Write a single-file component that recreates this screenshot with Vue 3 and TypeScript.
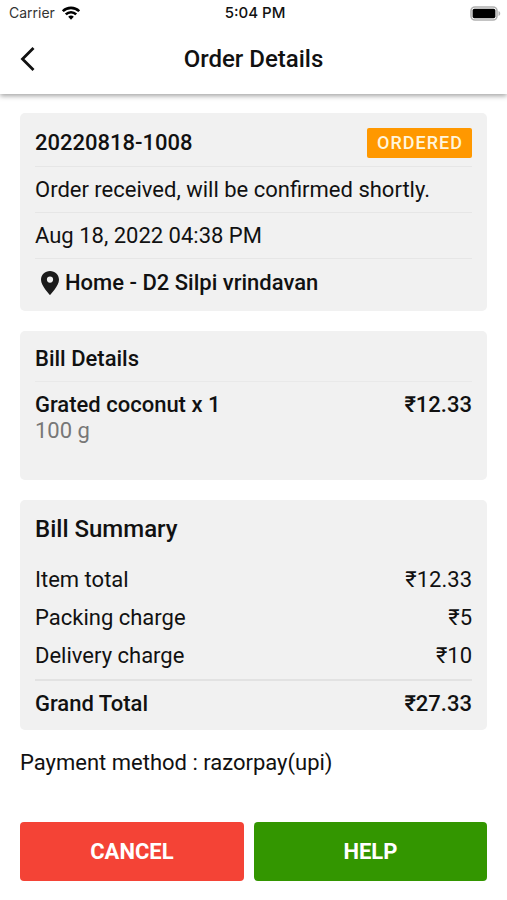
<script setup lang="ts">
interface Line {
  label: string
  amount: string
}

const order = {
  id: '20220818-1008',
  status: 'ORDERED',
  message: 'Order received, will be confirmed shortly.',
  placedAt: 'Aug 18, 2022 04:38 PM',
  address: 'Home - D2 Silpi vrindavan',
  payment: 'razorpay(upi)',
}

const items = [{ name: 'Grated coconut x 1', size: '100 g', price: '₹12.33' }]

const charges: Line[] = [
  { label: 'Item total', amount: '₹12.33' },
  { label: 'Packing charge', amount: '₹5' },
  { label: 'Delivery charge', amount: '₹10' },
]
const total: Line = { label: 'Grand Total', amount: '₹27.33' }
</script>

<template>
  <div class="screen">
    <header class="top">
      <div class="status-bar">
        <div class="carrier">
          <span>Carrier</span>
          <svg class="wifi" viewBox="0 0 18 14" aria-hidden="true">
            <g fill="none" stroke="#000" stroke-width="2.6">
              <path d="M.8 5.2C5.2 .7 12.8 .7 17.2 5.2" />
              <path d="M3.8 8.4C6.7 5.5 11.3 5.5 14.2 8.4" />
            </g>
            <path d="M6.2 10.8C7.8 9.2 10.2 9.2 11.8 10.8L9 13.7Z" />
          </svg>
        </div>
        <span class="time">5:04 PM</span>
        <svg class="battery" viewBox="0 0 31 15" aria-hidden="true">
          <rect x="1" y="1" width="26" height="13" rx="4" fill="#fff" stroke="#b0b0b0" stroke-width="1.6" />
          <rect x="2.6" y="2.8" width="22.8" height="9.4" rx="1.8" />
          <path d="M28.5 5V10C30.8 9 30.8 6 28.5 5Z" fill="#b0b0b0" />
        </svg>
      </div>
      <div class="title-bar">
        <button class="back" type="button" aria-label="Back">
          <svg viewBox="0 0 16 24" aria-hidden="true">
            <path d="M13.5 1L2.5 12L13.5 23" fill="none" stroke="#111" stroke-width="2.8" />
          </svg>
        </button>
        <h1>Order Details</h1>
      </div>
    </header>

    <main>
      <section class="card order">
        <div class="row head">
          <strong>{{ order.id }}</strong>
          <span class="badge">{{ order.status }}</span>
        </div>
        <div class="row">{{ order.message }}</div>
        <div class="row">{{ order.placedAt }}</div>
        <div class="row address">
          <svg class="pin" viewBox="0 0 18 24" aria-hidden="true">
            <path
              fill="#1c1c1c"
              fill-rule="evenodd"
              d="M9 0C4 0 0 3.9 0 8.7C0 15 9 24 9 24S18 15 18 8.7C18 3.9 14 0 9 0ZM9 5.5A3.1 3.1 0 1 1 9 11.7A3.1 3.1 0 1 1 9 5.5Z"
            />
          </svg>
          <strong>{{ order.address }}</strong>
        </div>
      </section>

      <section class="card bill">
        <h2>Bill Details</h2>
        <div v-for="item in items" :key="item.name" class="item">
          <div>
            <strong>{{ item.name }}</strong>
            <div class="size">{{ item.size }}</div>
          </div>
          <strong>{{ item.price }}</strong>
        </div>
      </section>

      <section class="card summary">
        <h2>Bill Summary</h2>
        <table>
          <tbody>
            <tr v-for="line in charges" :key="line.label">
              <th scope="row">{{ line.label }}</th>
              <td>{{ line.amount }}</td>
            </tr>
          </tbody>
          <tfoot>
            <tr>
              <th scope="row">{{ total.label }}</th>
              <td>{{ total.amount }}</td>
            </tr>
          </tfoot>
        </table>
      </section>

      <p class="payment">Payment method : {{ order.payment }}</p>

      <div class="actions">
        <button class="cancel" type="button">CANCEL</button>
        <button class="help" type="button">HELP</button>
      </div>
    </main>
  </div>
</template>

<style>
body {
  margin: 0;
  background: #fff;
}
</style>

<style scoped>
.screen {
  min-height: 100vh;
  font-family: Roboto, sans-serif;
  font-size: 22px;
  line-height: 26px;
  color: #111;
}
.top {
  background: #fff;
  box-shadow: 0 2px 5px rgba(0, 0, 0, 0.36);
}
.status-bar {
  display: grid;
  grid-template-columns: 1fr auto 1fr;
  align-items: center;
  height: 26px;
  padding: 0 6px 0 9px;
  font-family: Inter, sans-serif;
  font-size: 14px;
  line-height: 26px;
}
.carrier {
  display: flex;
  align-items: center;
  gap: 7px;
  color: #333;
}
.wifi {
  width: 18px;
  height: 14px;
}
.time {
  font-size: 15px;
  font-weight: 500;
}
.battery {
  justify-self: end;
  width: 31px;
  height: 15px;
}
.title-bar {
  display: grid;
  grid-template-columns: 40px 1fr 40px;
  align-items: center;
  height: 66px;
  padding: 0 14px 2px;
}
.back {
  display: flex;
  padding: 4px 6px;
  border: 0;
  background: none;
}
.back svg {
  width: 16px;
  height: 24px;
}
h1,
h2 {
  margin: 0;
  font-weight: 500;
}
h1 {
  font-size: 24px;
  line-height: 28px;
  text-align: center;
}
strong {
  font-weight: 500;
}
main {
  display: flex;
  flex-direction: column;
  gap: 20px;
  padding: 19px 20px;
}
.card {
  padding: 0 15px;
  border-radius: 5px;
  background: #f1f1f1;
}
.order {
  padding-top: 7px;
  padding-bottom: 4px;
}
.row {
  display: flex;
  align-items: center;
  height: 45px;
  border-bottom: 1px solid #e6e6e6;
}
.row:last-child {
  height: 48px;
  border-bottom: 0;
}
.row.head {
  justify-content: space-between;
  height: 46px;
}
.badge {
  padding: 0 9px 0 10px;
  border-radius: 2px;
  background: #ff9800;
  color: #fff5dc;
  font-size: 18px;
  font-weight: 500;
  line-height: 30px;
  letter-spacing: 1px;
}
.address {
  gap: 6px;
  padding-left: 6px;
}
.pin {
  width: 18px;
  height: 24px;
}
.bill h2 {
  padding: 15px 0 9px;
  border-bottom: 1px solid #e9e9e9;
  font-size: 22px;
}
.item {
  display: flex;
  justify-content: space-between;
  padding: 10px 0 36px;
}
.size {
  color: #777;
}
.summary {
  padding-bottom: 4px;
}
.summary h2 {
  padding: 15px 0 18px;
  font-size: 24px;
  line-height: 28px;
}
table {
  width: 100%;
  border-collapse: separate;
  border-spacing: 0;
}
th,
td {
  height: 38px;
  padding: 0;
  font-weight: 400;
  text-align: left;
}
td {
  text-align: right;
}
tbody tr:last-child > * {
  padding-bottom: 4px;
}
tfoot th,
tfoot td {
  height: 45px;
  border-top: 2px solid #e2e2e2;
  font-weight: 500;
}
.payment {
  margin: 0;
}
.actions {
  display: grid;
  grid-template-columns: 24fr 25fr;
  gap: 10px;
  padding-top: 26px;
}
.actions button {
  height: 59px;
  border: 0;
  border-radius: 4px;
  color: #fff;
  font-family: inherit;
  font-size: 22px;
  font-weight: 700;
}
.cancel {
  background: #f44336;
}
.help {
  background: #339600;
}
</style>
